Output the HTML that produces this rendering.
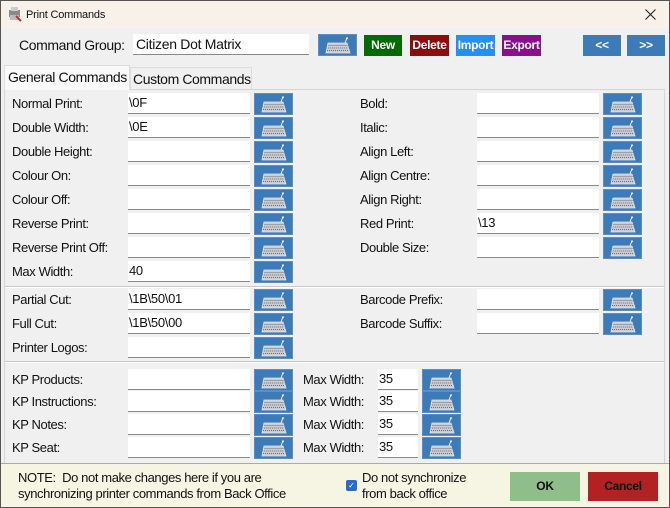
<!DOCTYPE html>
<html><head><meta charset="utf-8"><style>
*{box-sizing:border-box;margin:0;padding:0}
body{width:670px;height:508px;overflow:hidden;background:#f0f0f0;font-family:"Liberation Sans",Arial,sans-serif;font-size:13px;color:#111;position:relative}
.win{position:absolute;left:0;top:0;width:670px;height:508px;border:1px solid #555}
.title{position:absolute;left:1px;top:1px;width:668px;height:27px;background:#f8f1e9}
.a{position:absolute}
.lbl{position:absolute;font-size:13px;line-height:16px;letter-spacing:-0.4px}
.in{position:absolute;background:#fff;border-bottom:1px solid #8a8a8a;height:21px;font-size:13px;line-height:20px;padding-left:1px;letter-spacing:-0.3px}
.kb{position:absolute;width:39px;height:22px;background:#3d7bb8;border:1px solid #5a8ec4}
.kb svg{position:absolute;left:6px;top:2px}
.btn{position:absolute;color:#fff;font-weight:bold;font-size:12px;text-align:center;line-height:20px;height:21px;letter-spacing:-0.3px}
.sep{position:absolute;left:5px;width:659px;height:2px;border-top:1px solid #c8c8c8;border-bottom:1px solid #fff}
</style></head><body>
<div class="win"></div>
<div class="title"></div>
<svg class="a" style="left:7px;top:6px" width="16" height="16" viewBox="0 0 16 16"><rect x="2" y="4" width="11" height="7" fill="#8a8a8a"/><rect x="4" y="1" width="7" height="4" fill="#ccc"/><rect x="3" y="9" width="9" height="5" fill="#bbb"/><path d="M9 10 L14 15" stroke="#c03020" stroke-width="2"/></svg>
<div class="lbl" style="left:26px;top:7px;font-size:11px;letter-spacing:-0.2px">Print Commands</div>
<svg class="a" style="left:645px;top:9px" width="11" height="11"><path d="M0.5 0.5L10.5 10.5M10.5 0.5L0.5 10.5" stroke="#222" stroke-width="1.1"/></svg>

<div class="lbl" style="left:19px;top:37px;font-size:14px">Command Group:</div>
<div class="in" style="left:133px;top:34px;width:176px;font-size:14px;padding-left:3px;height:21px">Citizen Dot Matrix</div>
<div class="kb" style="left:318px;top:34px"><svg width="26" height="18"><use href="#k"/></svg></div>
<div class="btn" style="left:364px;top:35px;width:38px;background:#036b03">New</div>
<div class="btn" style="left:410px;top:35px;width:39px;background:#8c0d0d">Delete</div>
<div class="btn" style="left:456px;top:35px;width:39px;background:#2390f5">Import</div>
<div class="btn" style="left:502px;top:35px;width:39px;background:#8a0f8f">Export</div>
<div class="btn" style="left:583px;top:35px;width:38px;background:#3d7bb8;color:#fff">&lt;&lt;</div>
<div class="btn" style="left:627px;top:35px;width:38px;background:#3d7bb8;color:#fff">&gt;&gt;</div>

<div class="a" style="left:4px;top:89px;width:661px;height:375px;border:1px solid #d4d4d4;border-bottom:none;background:#f0f0f0"></div>
<div class="a" style="left:4px;top:65px;width:126px;height:25px;background:#f9f9f9;border:1px solid #ddd;border-bottom:none"></div>
<div class="lbl" style="left:8px;top:69px;font-size:14px">General Commands</div>
<div class="a" style="left:130px;top:67px;width:122px;height:22px;border:1px solid #ddd;border-bottom:none"></div>
<div class="lbl" style="left:133px;top:71px;font-size:14px">Custom Commands</div>

<svg width="0" height="0" style="position:absolute"><defs><g id="k">
<path d="M3 6 L22 6 L25 16 L1 16 Z" fill="#c9ccd2" stroke="#e6e6e6" stroke-width="0.8"/>
<path d="M3.5 8.5H22.5M2.8 11H23.2M2 13.5H24" stroke="#6d6f78" stroke-width="1" stroke-dasharray="1 1"/>
<path d="M20 6 Q21 3 22 1" stroke="#e8e8e8" stroke-width="1" fill="none"/>
<circle cx="22" cy="1.2" r="1" fill="#eee"/>
</g></defs></svg>

<div id="c"></div>

<div class="sep" style="top:286px"></div>
<div class="sep" style="top:361px"></div>

<div class="a" style="left:1px;top:463px;width:668px;height:44px;background:#f6f5e4;border-top:1px solid #aaa"></div>
<div class="lbl" style="left:18px;top:470px">NOTE:&nbsp; Do not make changes here if you are</div>
<div class="lbl" style="left:18px;top:486px">synchronizing printer commands from Back Office</div>
<div class="a" style="left:346px;top:480px;width:11px;height:11px;background:#2a6ad0;border-radius:2px;color:#fff;font-size:8px;line-height:11px;text-align:center">✓</div>
<div class="lbl" style="left:362px;top:470px">Do not synchronize</div>
<div class="lbl" style="left:362px;top:486px">from back office</div>
<div class="btn" style="left:510px;top:472px;width:70px;height:29px;line-height:29px;background:#8fbe8b;color:#111">OK</div>
<div class="btn" style="left:588px;top:472px;width:70px;height:29px;line-height:29px;background:#b22222;color:#111">Cancel</div>

<script>
var h='';
function row(lx,label,ix,iw,val,kx,top){
 h+='<div class="lbl" style="left:'+lx+'px;top:'+(top+3)+'px">'+label+'</div>';
 h+='<div class="in" style="left:'+ix+'px;top:'+top+'px;width:'+iw+'px">'+val+'</div>';
 h+='<div class="kb" style="left:'+kx+'px;top:'+top+'px"><svg width="26" height="18"><use href="#k"/></svg></div>';
}
var L=[['Normal Print:','\\0F'],['Double Width:','\\0E'],['Double Height:',''],['Colour On:',''],['Colour Off:',''],['Reverse Print:',''],['Reverse Print Off:',''],['Max Width:','40']];
L.forEach(function(r,i){row(12,r[0],128,122,r[1],254,93+i*24.1|0)});
var R=[['Bold:',''],['Italic:',''],['Align Left:',''],['Align Centre:',''],['Align Right:',''],['Red Print:','\\13'],['Double Size:','']];
R.forEach(function(r,i){row(360,r[0],477,122,r[1],603,93+i*24.1|0)});
[['Partial Cut:','\\1B\\50\\01'],['Full Cut:','\\1B\\50\\00'],['Printer Logos:','']].forEach(function(r,i){row(12,r[0],128,122,r[1],254,289+i*24)});
[['Barcode Prefix:',''],['Barcode Suffix:','']].forEach(function(r,i){row(360,r[0],477,122,r[1],603,289+i*24)});
var K=['KP Products:','KP Instructions:','KP Notes:','KP Seat:'];
var T=[369,391,414,437];
K.forEach(function(k,i){
 h+='<div class="lbl" style="left:12px;top:'+(T[i]+3)+'px">'+k+'</div>';
 h+='<div class="in" style="left:128px;top:'+T[i]+'px;width:122px"></div>';
 h+='<div class="kb" style="left:254px;top:'+T[i]+'px"><svg width="26" height="18"><use href="#k"/></svg></div>';
 row(303,'Max Width:',378,40,'35',422,T[i]);
});
document.getElementById('c').innerHTML=h;
</script>
</body></html>
